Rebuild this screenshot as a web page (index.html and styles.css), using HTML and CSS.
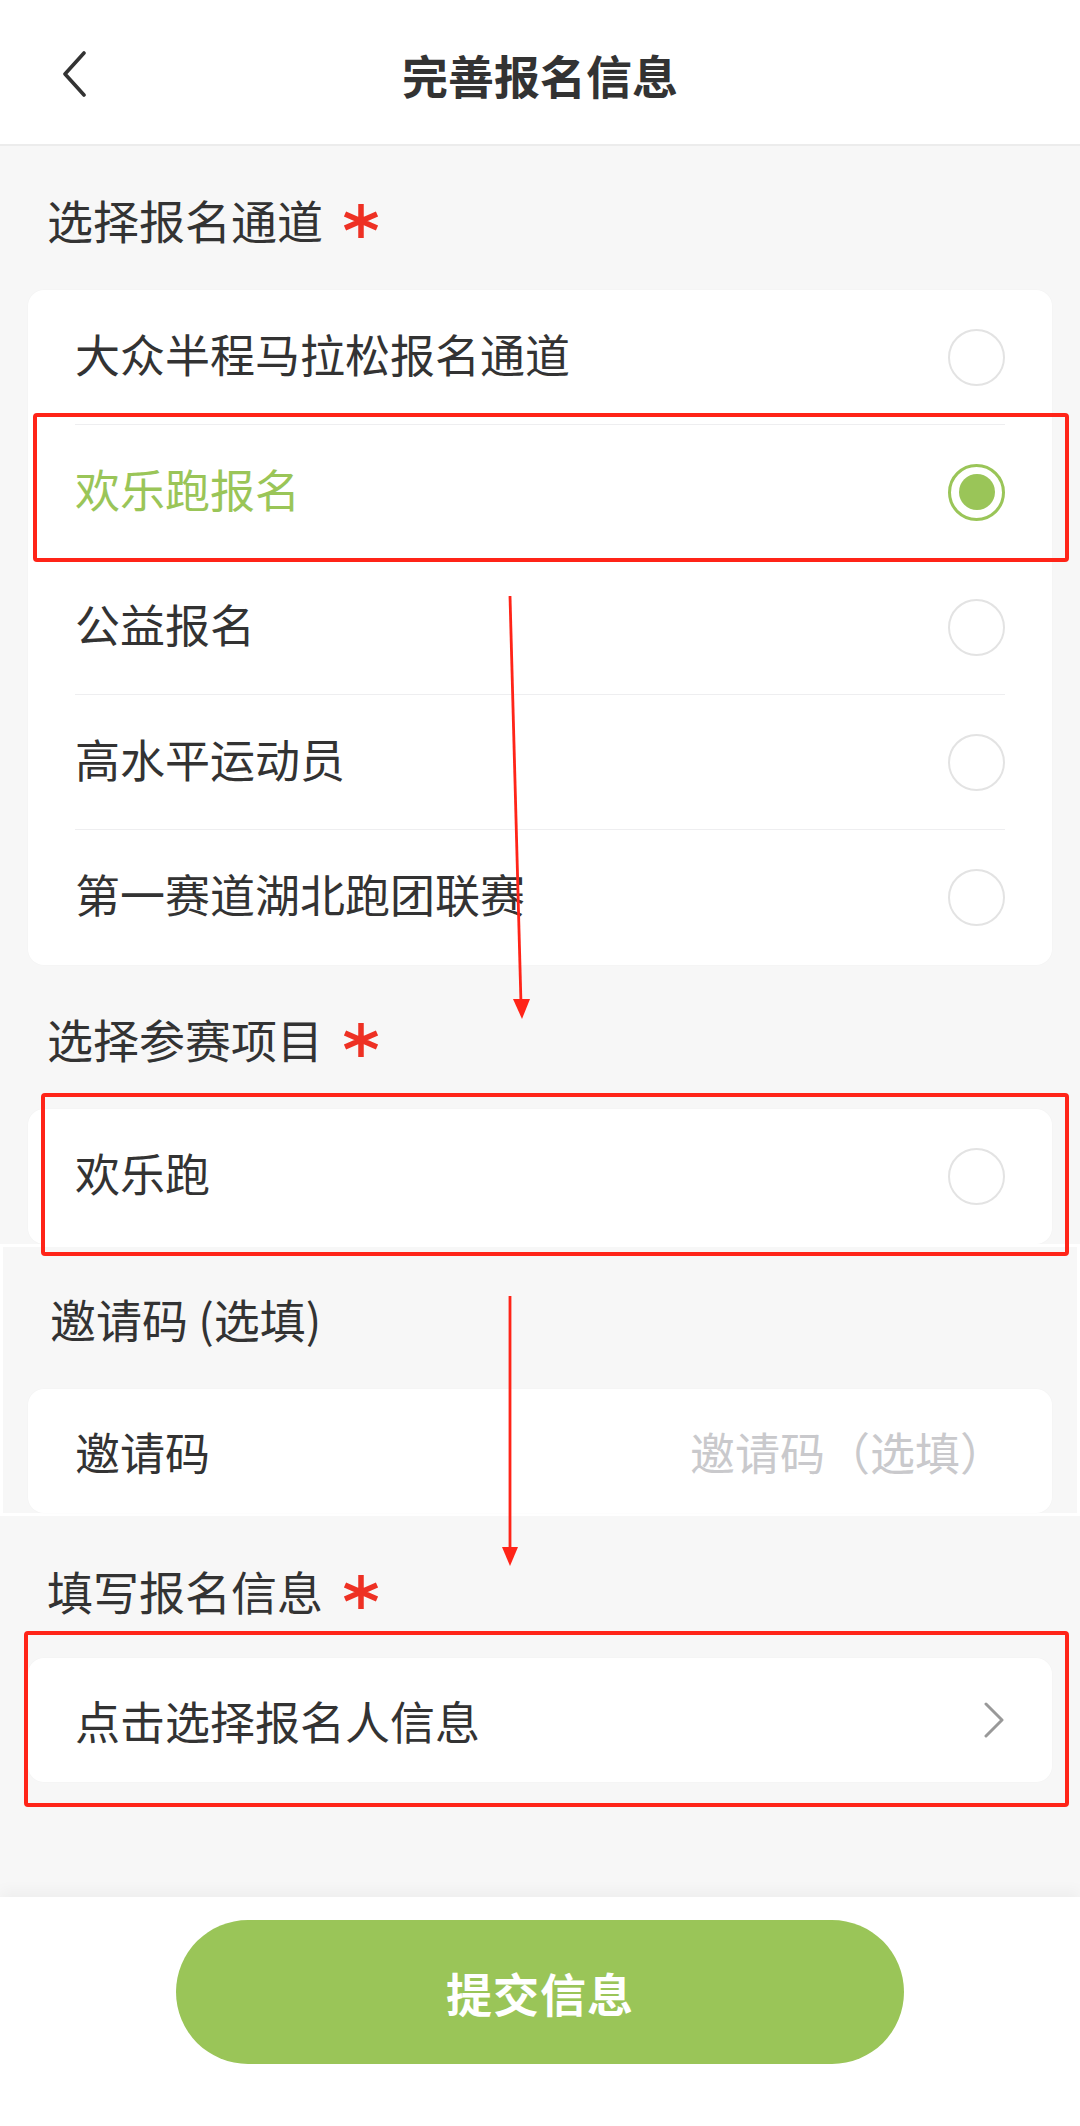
FILE: index.html
```html
<!DOCTYPE html>
<html lang="zh-CN">
<head>
<meta charset="UTF-8">
<meta name="viewport" content="width=device-width, initial-scale=1.0">
<title>完善报名信息</title>
<link rel="stylesheet" href="styles.css">
</head>
<body>

<div class="header">
    <div class="back">
        <svg width="28" height="46" viewBox="0 0 28 46"><path d="M24 2 L5 23 L24 44" fill="none" stroke="#333" stroke-width="3.6" stroke-linecap="round" stroke-linejoin="round"/></svg>
    </div>
    <div class="header-title">完善报名信息</div>
    <div></div>
</div>

<div class="content">
    <div class="section-title">选择报名通道 <span class="star"><svg width="36" height="34" viewBox="0 0 36 34"><path d="M18 0 V34 M2 10 L34 24 M2 24 L34 10" stroke="#ee3124" stroke-width="5.5"/></svg></span></div>
    <div class="card">
        <div class="row"><span>大众半程马拉松报名通道</span><span class="radio"></span></div>
        <div class="row row-active"><span>欢乐跑报名</span><span class="radio radio-on"></span></div>
        <div class="row"><span>公益报名</span><span class="radio"></span></div>
        <div class="row"><span>高水平运动员</span><span class="radio"></span></div>
        <div class="row"><span>第一赛道湖北跑团联赛</span><span class="radio"></span></div>
    </div>

    <div class="section-title">选择参赛项目 <span class="star"><svg width="36" height="34" viewBox="0 0 36 34"><path d="M18 0 V34 M2 10 L34 24 M2 24 L34 10" stroke="#ee3124" stroke-width="5.5"/></svg></span></div>
    <div class="card">
        <div class="row"><span>欢乐跑</span><span class="radio"></span></div>
    </div>

    <div class="invite-box">
        <div class="section-title invite-title">邀请码 (选填)</div>
        <div class="card">
            <div class="row row-short">
                <span>邀请码</span>
                <input class="invite-input" type="text" placeholder="邀请码（选填）">
            </div>
        </div>
    </div>

    <div class="section-title invite-title">填写报名信息 <span class="star"><svg width="36" height="34" viewBox="0 0 36 34"><path d="M18 0 V34 M2 10 L34 24 M2 24 L34 10" stroke="#ee3124" stroke-width="5.5"/></svg></span></div>
    <div class="card">
        <div class="row row-short">
            <span>点击选择报名人信息</span>
            <svg width="22" height="36" viewBox="0 0 22 36"><path d="M3 2 L19 18 L3 34" fill="none" stroke="#999" stroke-width="3" stroke-linecap="round" stroke-linejoin="round"/></svg>
        </div>
    </div>
</div>

<div class="footer">
    <button class="submit-button">提交信息</button>
</div>

<!-- red notes drawn over the screenshot -->
<svg class="marks" width="1080" height="2126" viewBox="0 0 1080 2126">
    <g fill="none" stroke="#ff2418" stroke-width="4">
        <rect x="35" y="415" width="1032" height="145" rx="2"/>
        <rect x="43" y="1095" width="1024" height="159" rx="2"/>
        <rect x="26" y="1633" width="1041" height="172" rx="2"/>
    </g>
    <g stroke="#ff2418" stroke-width="2.8">
        <line x1="510" y1="596" x2="521" y2="1004"/>
        <line x1="510" y1="1296" x2="510" y2="1551"/>
    </g>
    <g fill="#ff2418">
        <polygon points="513,999 530,999 522,1019"/>
        <polygon points="502,1547 518,1547 510,1566"/>
    </g>
</svg>

</body>
</html>
```

FILE: styles.css
```css
body {
    margin: 0;
    padding: 0;
    width: 1080px;
    position: relative;
    background-color: #fff;
    color: #333;
    font-family: "Noto Sans CJK SC", "Noto Sans", sans-serif;
}
.header {
    height: 132px;
    padding-top: 8px;
    padding-bottom: 4px;
    border-bottom: 2px solid #ececec;
    display: grid;
    grid-template-columns: 1fr auto 1fr;
    align-items: center;
    background-color: #fff;
}
.back {
    padding-left: 60px;
    display: flex;
    align-items: center;
}
.header-title {
    font-size: 46px;
    font-weight: 700;
    color: #333;
}
.content {
    background-color: #f7f7f7;
    padding-bottom: 115px;
}
.section-title {
    padding: 41px 47px 39px;
    height: 64px;
    line-height: 64px;
    font-size: 46px;
    color: #333;
    display: flex;
    align-items: center;
}
.invite-title {
    padding-top: 42px;
    padding-bottom: 36px;
}
.invite-box .invite-title {
    padding-top: 39px;
    padding-bottom: 39px;
}
.star {
    display: flex;
    margin-left: 20px;
    margin-top: 4px;
}
.card {
    margin: 0 28px;
    padding: 0 47px;
    background-color: #fff;
    border-radius: 16px;
    box-shadow: 0 0 2px rgba(0, 0, 0, 0.03);
}
.row {
    height: 135px;
    box-sizing: border-box;
    padding-bottom: 8px;
    border-bottom: 1px solid #eeeef0;
    display: flex;
    align-items: center;
    justify-content: space-between;
    font-size: 45px;
    color: #333;
}
.row .radio {
    margin-top: 8px;
}
.row:last-child {
    border-bottom: none;
}
.row-short {
    height: 124px;
    padding-bottom: 0;
}
.row-active {
    color: #9ac558;
}
.radio {
    width: 57px;
    height: 57px;
    box-sizing: border-box;
    border: 2px solid #e3e3e3;
    border-radius: 50%;
    display: flex;
    align-items: center;
    justify-content: center;
}
.radio-on {
    border: 3px solid #9ac558;
}
.radio-on::after {
    content: "";
    width: 36px;
    height: 36px;
    border-radius: 50%;
    background-color: #9ac558;
}
.invite-box {
    border: 3px solid #fff;
}
.invite-box .card {
    margin: 0 25px;
}
.invite-input {
    border: none;
    outline: none;
    background: transparent;
    text-align: right;
    width: 420px;
    padding: 0;
    font-family: "Noto Sans CJK SC", "Noto Sans", sans-serif;
    font-size: 45px;
    color: #333;
}
.invite-input::placeholder {
    color: #c9c9cc;
}
.footer {
    height: 229px;
    box-sizing: border-box;
    padding-top: 23px;
    background-color: #fff;
    box-shadow: 0 -6px 14px rgba(0, 0, 0, 0.04);
    display: flex;
    justify-content: center;
    align-items: flex-start;
    position: relative;
}
.submit-button {
    width: 728px;
    height: 144px;
    border: none;
    border-radius: 72px;
    background-color: #9ac558;
    color: #fff;
    font-family: "Noto Sans CJK SC", "Noto Sans", sans-serif;
    font-size: 46px;
    font-weight: 700;
    letter-spacing: 1px;
    cursor: pointer;
}
.marks {
    position: absolute;
    top: 0;
    left: 0;
    pointer-events: none;
}
```
